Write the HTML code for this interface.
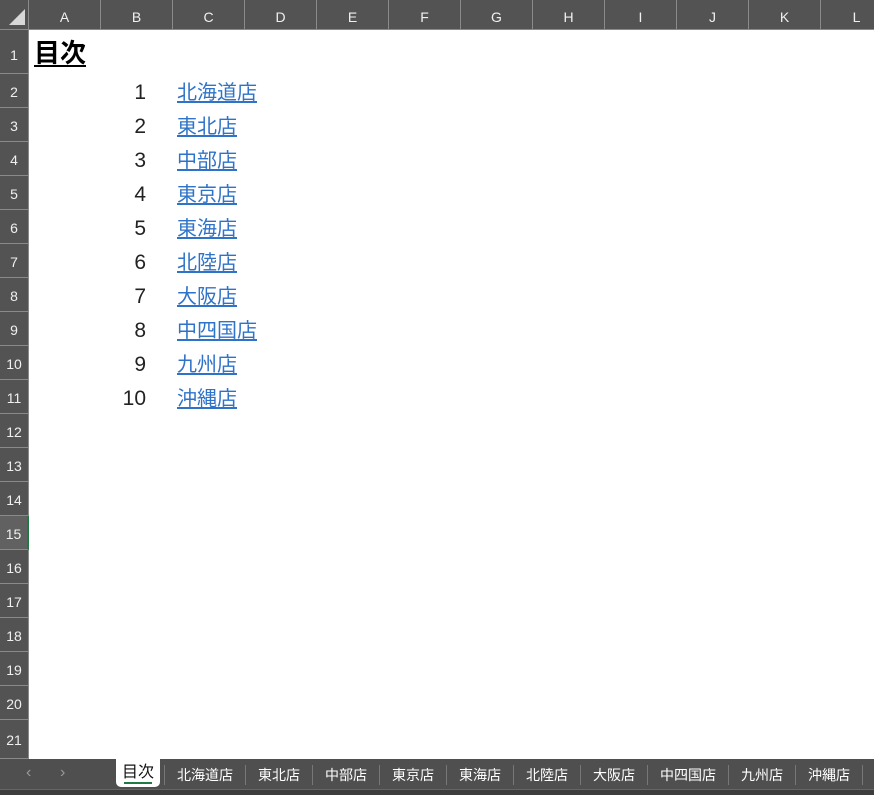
<!DOCTYPE html>
<html><head><meta charset="utf-8"><style>
*{margin:0;padding:0;box-sizing:border-box}
body{width:874px;height:795px;overflow:hidden;background:#fff;position:relative;font-family:"Liberation Sans","Noto Sans CJK JP",sans-serif}
.hdr{position:absolute;top:0;left:0;width:874px;height:30px;background:#535353;border-bottom:1px solid #8a8a8a}
.col{position:absolute;top:0;height:30px;width:72px;color:#f0f0f0;font-size:14px;text-align:center;line-height:34px;border-right:1px solid #8a8a8a}
.rh{position:absolute;left:0;width:29px;background:#535353;color:#f0f0f0;font-size:14px;text-align:center;border-bottom:1px solid #8a8a8a;border-right:1px solid #8a8a8a}
.num{position:absolute;width:46px;left:100px;text-align:right;font-size:21px;color:#222;line-height:34px;height:34px;margin-top:2px}
.lk{position:absolute;left:177px;font-size:20px;color:#2f73c8;text-decoration:underline;text-underline-offset:2px;line-height:34px;height:34px;margin-top:2px}
.tabs{position:absolute;left:0;top:759px;width:874px;height:31px;background:#4f4f4f}
.bot{position:absolute;left:0;top:789px;width:874px;height:6px;background:#3d3d3d;border-top:1px solid #666}
.t{position:absolute;color:#fff;font-size:14px;text-align:center;border-right:1px solid #777;height:20px;top:6px;line-height:20px}
</style></head><body>
<div class="hdr">
<svg style="position:absolute;left:9px;top:9px" width="16" height="16"><polygon points="16,0 16,16 0,16" fill="#d8d8d8"/></svg>
<div class="col" style="left:29px">A</div><div class="col" style="left:101px">B</div><div class="col" style="left:173px">C</div><div class="col" style="left:245px">D</div><div class="col" style="left:317px">E</div><div class="col" style="left:389px">F</div><div class="col" style="left:461px">G</div><div class="col" style="left:533px">H</div><div class="col" style="left:605px">I</div><div class="col" style="left:677px">J</div><div class="col" style="left:749px">K</div><div class="col" style="left:821px">L</div>
<div style="position:absolute;left:28px;top:0;width:1px;height:30px;background:#8a8a8a"></div>
</div>
<div class="rh" style="top:30px;height:44px;line-height:50px">1</div>
<div class="rh" style="top:74px;height:34px;line-height:36px">2</div>
<div class="rh" style="top:108px;height:34px;line-height:36px">3</div>
<div class="rh" style="top:142px;height:34px;line-height:36px">4</div>
<div class="rh" style="top:176px;height:34px;line-height:36px">5</div>
<div class="rh" style="top:210px;height:34px;line-height:36px">6</div>
<div class="rh" style="top:244px;height:34px;line-height:36px">7</div>
<div class="rh" style="top:278px;height:34px;line-height:36px">8</div>
<div class="rh" style="top:312px;height:34px;line-height:36px">9</div>
<div class="rh" style="top:346px;height:34px;line-height:36px">10</div>
<div class="rh" style="top:380px;height:34px;line-height:36px">11</div>
<div class="rh" style="top:414px;height:34px;line-height:36px">12</div>
<div class="rh" style="top:448px;height:34px;line-height:36px">13</div>
<div class="rh" style="top:482px;height:34px;line-height:36px">14</div>
<div class="rh" style="top:516px;height:34px;line-height:36px;background:#616161;border-right:2px solid #1f7a45">15</div>
<div class="rh" style="top:550px;height:34px;line-height:36px">16</div>
<div class="rh" style="top:584px;height:34px;line-height:36px">17</div>
<div class="rh" style="top:618px;height:34px;line-height:36px">18</div>
<div class="rh" style="top:652px;height:34px;line-height:36px">19</div>
<div class="rh" style="top:686px;height:34px;line-height:36px">20</div>
<div class="rh" style="top:720px;height:39px;line-height:40px">21</div>
<div style="position:absolute;left:34px;top:37px;font-size:26px;font-weight:bold;color:#000;text-decoration:underline;text-underline-offset:3px;line-height:32px">目次</div>
<div class="num" style="top:74px">1</div><a class="lk" style="top:74px">北海道店</a>
<div class="num" style="top:108px">2</div><a class="lk" style="top:108px">東北店</a>
<div class="num" style="top:142px">3</div><a class="lk" style="top:142px">中部店</a>
<div class="num" style="top:176px">4</div><a class="lk" style="top:176px">東京店</a>
<div class="num" style="top:210px">5</div><a class="lk" style="top:210px">東海店</a>
<div class="num" style="top:244px">6</div><a class="lk" style="top:244px">北陸店</a>
<div class="num" style="top:278px">7</div><a class="lk" style="top:278px">大阪店</a>
<div class="num" style="top:312px">8</div><a class="lk" style="top:312px">中四国店</a>
<div class="num" style="top:346px">9</div><a class="lk" style="top:346px">九州店</a>
<div class="num" style="top:380px">10</div><a class="lk" style="top:380px">沖縄店</a>
<div class="tabs">
<div style="position:absolute;left:26px;top:5px;color:#999;font-size:16px">‹</div>
<div style="position:absolute;left:60px;top:5px;color:#999;font-size:16px">›</div>
<div style="position:absolute;left:116px;top:0;width:44px;height:28px;background:#fff;border-radius:0 0 5px 5px;color:#111;font-size:16px;text-align:center;line-height:28px">目次<div style="position:absolute;left:8px;top:23px;width:28px;height:2px;background:#1f7a45"></div></div>
<div class="t" style="left:164px;width:82px;border-left:1px solid #777">北海道店</div>
<div class="t" style="left:246px;width:67px">東北店</div>
<div class="t" style="left:313px;width:67px">中部店</div>
<div class="t" style="left:380px;width:67px">東京店</div>
<div class="t" style="left:447px;width:67px">東海店</div>
<div class="t" style="left:514px;width:67px">北陸店</div>
<div class="t" style="left:581px;width:67px">大阪店</div>
<div class="t" style="left:648px;width:81px">中四国店</div>
<div class="t" style="left:729px;width:67px">九州店</div>
<div class="t" style="left:796px;width:67px">沖縄店</div>
</div>
<div class="bot"></div>
</body></html>
